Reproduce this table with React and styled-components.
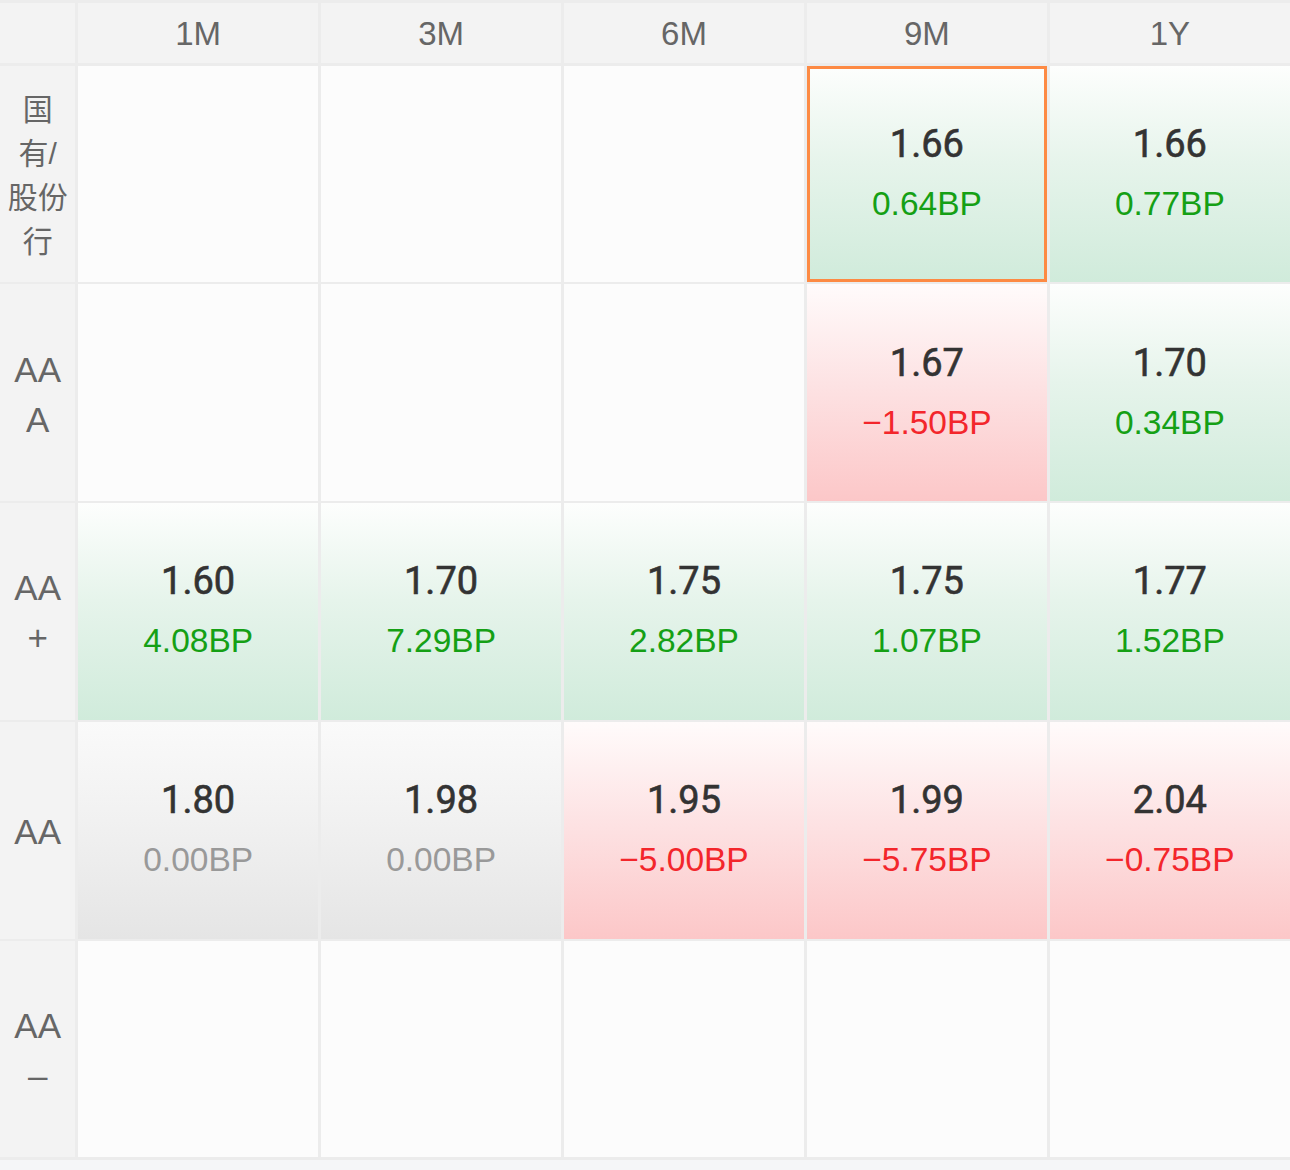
import React from "react";
import styled, { createGlobalStyle, css } from "styled-components";

const GlobalStyle = createGlobalStyle`
  html, body {
    margin: 0;
    padding: 0;
    background: #f5f6f8;
    font-family: "Liberation Sans", "Noto Sans CJK SC", Arial, sans-serif;
  }
`;

const Board = styled.div`
  display: grid;
  grid-template-columns: 75.4px repeat(5, 1fr);
  grid-template-rows: 60px repeat(5, 216.4px);
  column-gap: 2.6px;
  row-gap: 2.5px;
  padding: 3px 0 3px;
  background: #ececec;
`;

const Corner = styled.div`
  background: #f3f3f3;
`;

const HeadCell = styled.div`
  display: flex;
  align-items: center;
  justify-content: center;
  padding-top: 2px;
  background: #f3f3f3;
  color: #666;
  font-size: 33px;
`;

const RowLabel = styled.div`
  display: flex;
  flex-direction: column;
  align-items: center;
  justify-content: center;
  background: #f3f3f3;
  color: #666;
  font-size: ${(p) => (p.cjk ? "30px" : "35px")};
  line-height: ${(p) => (p.cjk ? "44px" : "50px")};
  padding-top: 4px;
  font-family: "Liberation Sans", "Noto Sans CJK SC", sans-serif;
`;

const tones = {
  up: css`
    background: linear-gradient(to bottom, #fdfefd 0%, #e6f4eb 45%, #d0ebdb 100%);
  `,
  down: css`
    background: linear-gradient(to bottom, #fffbfb 0%, #fde3e4 45%, #fcc7c8 100%);
  `,
  flat: css`
    background: linear-gradient(to bottom, #fafafa 0%, #f1f1f1 45%, #e5e5e5 100%);
  `,
  empty: css`
    background: #fcfcfc;
  `,
};

const QuoteCell = styled.div`
  display: flex;
  flex-direction: column;
  align-items: center;
  justify-content: center;
  gap: 10px;
  box-sizing: border-box;
  ${(p) => tones[p.tone]}
  ${(p) =>
    p.selected &&
    css`
      box-shadow: inset 0 0 0 3px #fd8a44;
    `}
`;

const Rate = styled.div`
  font-family: Roboto, "Liberation Sans", sans-serif;
  font-weight: 400;
  -webkit-text-stroke: 0.6px #333;
  font-size: 38px;
  line-height: 50px;
  color: #333;
`;

const Change = styled.div`
  font-size: 33.5px;
  line-height: 50px;
  color: ${(p) =>
    p.tone === "up" ? "#15a015" : p.tone === "down" ? "#f3262b" : "#999"};
`;

const terms = ["1M", "3M", "6M", "9M", "1Y"];

const q = (rate, bp, selected) => ({ rate, bp, selected });

const rows = [
  {
    label: ["国", "有/", "股份", "行"],
    cjk: true,
    cells: [null, null, null, q("1.66", 0.64, true), q("1.66", 0.77)],
  },
  {
    label: ["AA", "A"],
    cells: [null, null, null, q("1.67", -1.5), q("1.70", 0.34)],
  },
  {
    label: ["AA", "+"],
    cells: [
      q("1.60", 4.08),
      q("1.70", 7.29),
      q("1.75", 2.82),
      q("1.75", 1.07),
      q("1.77", 1.52),
    ],
  },
  {
    label: ["AA"],
    cells: [
      q("1.80", 0),
      q("1.98", 0),
      q("1.95", -5.0),
      q("1.99", -5.75),
      q("2.04", -0.75),
    ],
  },
  {
    label: ["AA", "–"],
    cells: [null, null, null, null, null],
  },
];

const toneOf = (bp) => (bp > 0 ? "up" : bp < 0 ? "down" : "flat");

const formatBp = (bp) =>
  (bp < 0 ? "\u2212" : "") + Math.abs(bp).toFixed(2) + "BP";

const App = () => (
  <>
    <GlobalStyle />
    <Board>
      <Corner />
      {terms.map((t) => (
        <HeadCell key={t}>{t}</HeadCell>
      ))}
      {rows.map((row, ri) => (
        <React.Fragment key={ri}>
          <RowLabel cjk={row.cjk}>
            {row.label.map((line, li) => (
              <span key={li}>{line}</span>
            ))}
          </RowLabel>
          {row.cells.map((cell, ci) =>
            cell ? (
              <QuoteCell
                key={ci}
                tone={toneOf(cell.bp)}
                selected={cell.selected}
              >
                <Rate>{cell.rate}</Rate>
                <Change tone={toneOf(cell.bp)}>{formatBp(cell.bp)}</Change>
              </QuoteCell>
            ) : (
              <QuoteCell key={ci} tone="empty" />
            )
          )}
        </React.Fragment>
      ))}
    </Board>
  </>
);

export default App;
